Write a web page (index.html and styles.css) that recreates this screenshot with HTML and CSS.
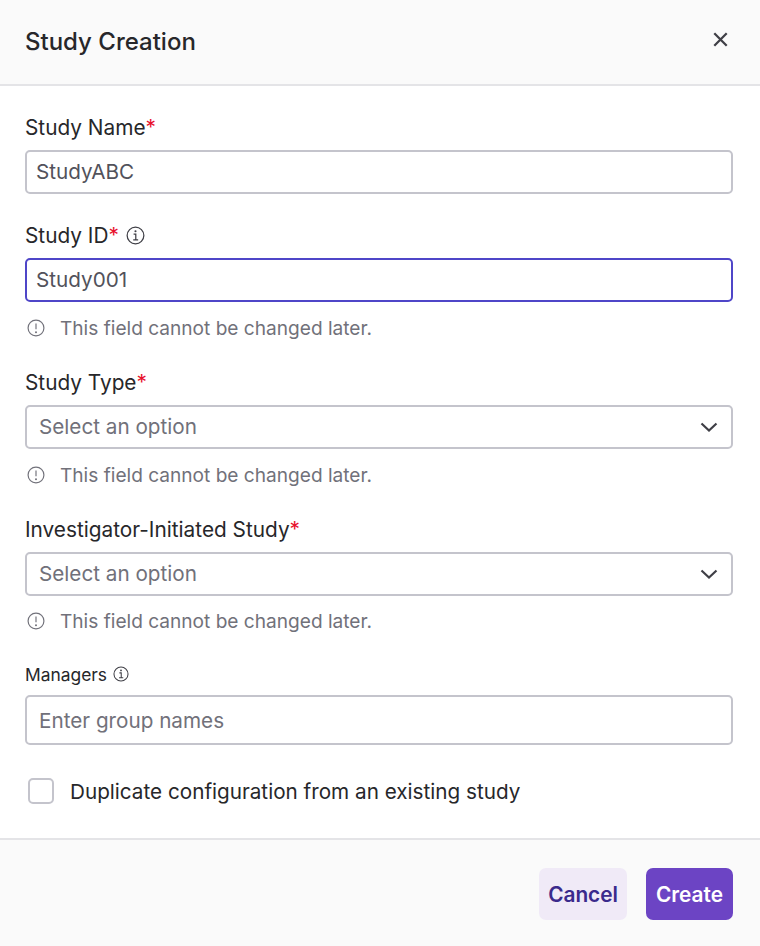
FILE: index.html

```html
<!DOCTYPE html>
<html lang="en">
<head>
    <meta charset="UTF-8">
    <title>Study Creation</title>
    <link rel="stylesheet" href="styles.css">
</head>
<body>
    <div class="modal">
        <header class="modal-header">
            <h1>Study Creation</h1>
            <svg class="close-icon" viewBox="0 0 14 14"><path d="M1.2 1.2l11.6 11.6M12.8 1.2L1.2 12.8"/></svg>
        </header>

        <form class="modal-body">
            <div class="field field-name">
                <label class="label">Study Name<span class="req">*</span></label>
                <div class="control">StudyABC</div>
            </div>

            <div class="field field-id">
                <label class="label">Study ID<span class="req">*</span>
                    <svg class="info-icon" viewBox="0 0 20 20"><circle cx="10" cy="10" r="8.8"/><path d="M8 8.6h2.3v6M7.6 14.6h5.2"/><circle class="dot" cx="10" cy="5.6" r="1.1"/></svg>
                </label>
                <div class="control control-focus">Study001</div>
                <div class="hint">
                    <svg class="hint-icon" viewBox="0 0 20 20"><circle cx="10" cy="10" r="8.8"/><path d="M10 5v6.5"/><circle class="dot" cx="10" cy="14.6" r="1.1"/></svg>
                    This field cannot be changed later.
                </div>
            </div>

            <div class="field field-type">
                <label class="label">Study Type<span class="req">*</span></label>
                <div class="control control-select">
                    <span class="placeholder">Select an option</span>
                    <svg class="chevron" viewBox="0 0 18 10"><path d="M1.5 1.5L9 8.5l7.5-7"/></svg>
                </div>
                <div class="hint">
                    <svg class="hint-icon" viewBox="0 0 20 20"><circle cx="10" cy="10" r="8.8"/><path d="M10 5v6.5"/><circle class="dot" cx="10" cy="14.6" r="1.1"/></svg>
                    This field cannot be changed later.
                </div>
            </div>

            <div class="field field-iis">
                <label class="label">Investigator-Initiated Study<span class="req">*</span></label>
                <div class="control control-select">
                    <span class="placeholder">Select an option</span>
                    <svg class="chevron" viewBox="0 0 18 10"><path d="M1.5 1.5L9 8.5l7.5-7"/></svg>
                </div>
                <div class="hint">
                    <svg class="hint-icon" viewBox="0 0 20 20"><circle cx="10" cy="10" r="8.8"/><path d="M10 5v6.5"/><circle class="dot" cx="10" cy="14.6" r="1.1"/></svg>
                    This field cannot be changed later.
                </div>
            </div>

            <div class="field field-managers">
                <label class="label label-small">Managers
                    <svg class="info-icon info-small" viewBox="0 0 20 20"><circle cx="10" cy="10" r="8.8"/><path d="M8 8.6h2.3v6M7.6 14.6h5.2"/><circle class="dot" cx="10" cy="5.6" r="1.1"/></svg>
                </label>
                <div class="control control-tall"><span class="placeholder">Enter group names</span></div>
            </div>

            <div class="check-row">
                <span class="checkbox"></span>
                Duplicate configuration from an existing study
            </div>
        </form>

        <footer class="modal-footer">
            <button class="button button-cancel">Cancel</button>
            <button class="button button-create">Create</button>
        </footer>
    </div>
</body>
</html>
```

FILE: styles.css

```css
/* General Styles */
* {
    box-sizing: border-box;
}

body {
    margin: 0;
    background-color: #fff;
    font-family: 'Inter', 'Liberation Sans', sans-serif;
    color: #27272a;
}

.modal {
    display: flex;
    flex-direction: column;
    height: 946px;
}

/* Header */
.modal-header {
    display: flex;
    justify-content: space-between;
    align-items: center;
    height: 86px;
    padding: 0 32px 2px 25px;
    background-color: #fafafa;
    border-bottom: 2px solid #e4e4e7;
}

.modal-header h1 {
    margin: 0;
    font-size: 24px;
    font-weight: 500;
}

.close-icon {
    width: 15px;
    height: 15px;
    margin-top: -3px;
    fill: none;
    stroke: #3f3f46;
    stroke-width: 2.1;
}

/* Form */
.modal-body {
    flex: 1;
    padding: 0 27px 0 25px;
}

.field-name {
    padding-top: 27px;
}

.field-id {
    padding-top: 27px;
}

.field-type {
    padding-top: 28px;
}

.field-iis {
    padding-top: 28px;
}

.field-managers {
    padding-top: 29px;
}

.label {
    display: flex;
    align-items: center;
    height: 28px;
    margin-bottom: 9px;
    font-size: 20.8px;
    color: #27272a;
}

.label-small {
    height: 24px;
    margin-bottom: 9px;
    font-size: 17.4px;
}

.req {
    color: #e8112d;
}

.info-icon {
    width: 19px;
    height: 19px;
    margin-left: 7px;
    fill: none;
    stroke: #3f3f46;
    stroke-width: 1.3;
}

.info-small {
    width: 16px;
    height: 16px;
    margin-left: 6px;
}

.dot {
    fill: #3f3f46;
    stroke: none;
}

.control {
    display: flex;
    align-items: center;
    height: 44px;
    padding: 0 9px 1px;
    font-size: 20.7px;
    color: #52525b;
    border: 2px solid #c4c4cc;
    border-radius: 5px;
}

.control-focus {
    border-color: #4f46c8;
}

.control-select {
    justify-content: space-between;
    padding: 0 13px 1px 12px;
}

.control-tall {
    height: 50px;
    padding: 0 12px;
}

.placeholder {
    color: #71717a;
}

.chevron {
    width: 18px;
    height: 10px;
    fill: none;
    stroke: #3f3f46;
    stroke-width: 2.2;
}

.hint {
    display: flex;
    align-items: center;
    height: 24px;
    margin-top: 14px;
    font-size: 19.1px;
    color: #71717a;
}

.field-iis .hint {
    margin-top: 13px;
}

.hint-icon {
    width: 18px;
    height: 18px;
    margin: 0 15px 0 2px;
    fill: none;
    stroke: #71717a;
    stroke-width: 1.3;
}

.hint-icon .dot {
    fill: #71717a;
}

.check-row {
    display: flex;
    align-items: center;
    margin-top: 33px;
    padding-left: 3px;
    font-size: 20.7px;
    color: #27272a;
}

.checkbox {
    width: 26px;
    height: 26px;
    margin-right: 16px;
    border: 2px solid #c4c4cc;
    border-radius: 5px;
}

/* Footer */
.modal-footer {
    display: flex;
    justify-content: flex-end;
    gap: 19px;
    height: 108px;
    padding: 28px 27px 0 0;
    background-color: #fafafa;
    border-top: 2px solid #e4e4e7;
}

.button {
    height: 52px;
    padding: 0 9px;
    font-family: inherit;
    font-size: 20.8px;
    font-weight: 600;
    border: none;
    border-radius: 7px;
}

.button-cancel {
    color: #3b2a8c;
    background-color: #f0eaf7;
}

.button-create {
    padding: 0 10px;
    color: #fff;
    background-color: #6c44c4;
}
```
